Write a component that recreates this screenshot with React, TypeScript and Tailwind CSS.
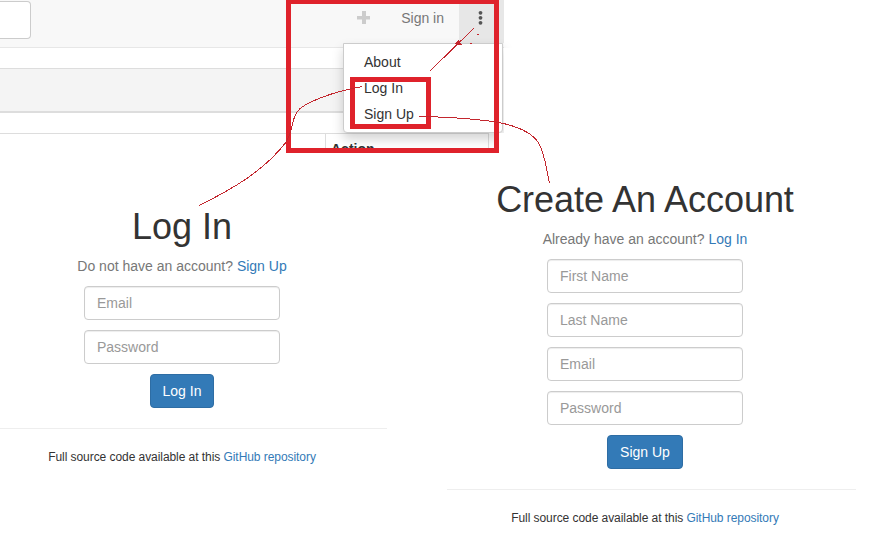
import type { ReactNode } from 'react';

function Field({ placeholder }: { placeholder: string }) {
  return (
    <input
      placeholder={placeholder}
      className="mb-2.5 block h-[34px] w-[196px] rounded border border-[#ccc] bg-white px-3 text-sm shadow-[inset_0_1px_1px_rgba(0,0,0,0.075)] placeholder:text-[#999]"
    />
  );
}

function Link({ children }: { children: ReactNode }) {
  return <a className="text-[#337ab7]">{children}</a>;
}

type FormProps = {
  title: string;
  question: string;
  link: string;
  fields: string[];
  action: string;
};

function AccountForm({ title, question, link, fields, action }: FormProps) {
  return (
    <form className="flex flex-col items-center">
      <h1 className="text-[36px] leading-[40px] tracking-[-0.03px] whitespace-nowrap">{title}</h1>
      <p className="mt-[9px] mb-2.5 text-sm leading-5 text-[#777]">
        {question} <Link>{link}</Link>
      </p>
      {fields.map((f) => (
        <Field key={f} placeholder={f} />
      ))}
      <button
        type="button"
        className="h-[34px] rounded border border-[#2e6da4] bg-[#337ab7] px-[11.5px] text-sm leading-5 whitespace-nowrap text-white last:min-w-16 data-[wide=true]:w-[76px]"
        data-wide={fields.length > 2}
      >
        {action}
      </button>
    </form>
  );
}

function Footer() {
  return (
    <p className="mt-5 text-center text-xs leading-[17px] tracking-[-0.06px]">
      Full source code available at this <Link>GitHub repository</Link>
    </p>
  );
}

function AppHeader() {
  return (
    <header className="relative h-[153px] w-[510px]">
      <nav className="flex h-12 w-[504px] border-b border-[#e7e7e7] bg-[#f8f8f8]">
        <div className="mt-px h-[38px] w-[31px] rounded-r-[4px] border border-l-0 border-[#ccc] bg-white" />
        <div className="ml-auto flex h-[43px]">
          <svg className="mt-[11px] h-[13px] w-[13px]" viewBox="0 0 13 13">
            <path d="M5 0h4v5h4v3.500H9v4.500H5V8.500H0V5h5z" fill="#ccc" />
          </svg>
          <span className="ml-[31px] pt-2 text-sm leading-5 text-[#777]">Sign in</span>
          <div className="ml-[15px] w-[45px] bg-[#e7e7e7]">
            <svg className="mt-[10px] ml-[19px] h-4 w-[5px]" viewBox="0 0 5 16">
              <circle cx="2.5" cy="2.8" r="1.9" fill="#555" />
              <circle cx="2.5" cy="7.8" r="1.9" fill="#555" />
              <circle cx="2.5" cy="12.8" r="1.9" fill="#555" />
            </svg>
          </div>
        </div>
      </nav>
      <div className="mt-5 h-[45px] w-[489px] border-t border-b-2 border-[#ddd] bg-[#f4f4f4]" />
      <div className="mt-5 flex h-[15px] w-[489px] overflow-hidden border-t border-r border-[#ddd]">
        <div className="w-[325px] shrink-0" />
        <div className="grow border-l border-[#ddd] pt-[5px] pl-[5px] text-sm leading-5 font-bold">Action</div>
      </div>
      <ul className="absolute top-[43px] left-[343px] h-[90px] w-[160px] rounded-b border border-[#ccc] bg-white py-[5px] shadow-[0_6px_12px_rgba(0,0,0,0.175)]">
        {['About', 'Log In', 'Sign Up'].map((item) => (
          <li key={item} className="px-5 py-[3px] text-sm leading-5">
            {item}
          </li>
        ))}
      </ul>
      <div className="absolute top-[133px] left-[499px] h-[20px] w-[24px] bg-white" />
      <div className="absolute top-[48px] left-[504px] h-[90px] w-[20px] bg-white" />
    </header>
  );
}

function Annotations() {
  return (
    <svg className="absolute top-0 left-0" width="893" height="558" viewBox="0 0 893 558" fill="none" shapeRendering="crispEdges">
      <path d="M286 0H499V153H286zM291 4V148H494V4z" fill="#df222b" fillRule="evenodd" />
      <path d="M350 77H431V129H350zM355 82V124H426V82z" fill="#df222b" fillRule="evenodd" />
      <g stroke="#c3272e" strokeWidth="1">
        <path d="M362 86.500C343 90 323 96 310 102.500C301 107 297 110 294.500 117C291 127 291 136 285 143.500C264 170 235 188 199 205.500" />
        <path d="M419 116.500C451 117 477 119 499 122.500C516 126 531 132 538 142C545 153 546 168 549.500 183" />
        <path d="M473.500 28.500L429.500 71.500" />
      </g>
      <path d="M454.500 44L459 39.500L460 42L462 45L458 45z" fill="#c3272e" />
      <rect x="477" y="34" width="2" height="1" fill="#c3272e" />
      <rect x="470" y="43" width="2" height="1" fill="#c3272e" />
    </svg>
  );
}

export default function App() {
  return (
    <div className="relative h-[558px] w-[893px] overflow-hidden bg-white font-['Liberation_Sans',Arial,sans-serif] text-[#333]">
      <AppHeader />
      <main className="flex">
        <section className="w-[447px] pt-[54px]">
          <div className="w-[364px]">
            <AccountForm
              title="Log In"
              question="Do not have an account?"
              link="Sign Up"
              fields={['Email', 'Password']}
              action="Log In"
            />
          </div>
          <hr className="mt-5 w-[387px] border-[#eee]" />
          <div className="w-[364px]">
            <Footer />
          </div>
        </section>
        <section className="w-[409px] pt-[27px]">
          <div className="w-[396px]">
            <AccountForm
              title="Create An Account"
              question="Already have an account?"
              link="Log In"
              fields={['First Name', 'Last Name', 'Email', 'Password']}
              action="Sign Up"
            />
          </div>
          <hr className="mt-5 border-[#eee]" />
          <div className="w-[396px]">
            <Footer />
          </div>
        </section>
      </main>
      <Annotations />
    </div>
  );
}
